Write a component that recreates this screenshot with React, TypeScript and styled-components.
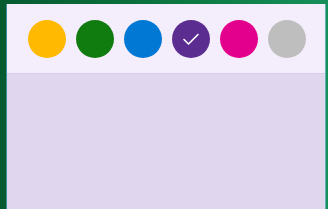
import styled, { createGlobalStyle } from "styled-components";

const GlobalStyle = createGlobalStyle`
  html, body {
    margin: 0;
    padding: 0;
    height: 100%;
  }
  body {
    font-family: "Segoe UI", "Open Sans", sans-serif;
    background: #0b6236;
  }
`;

const Backdrop = styled.div`
  width: 328px;
  height: 209px;
  padding: 4px 3px 0 7px;
  box-sizing: border-box;
  background: linear-gradient(90deg, #075a30 0%, #0d7a43 60%, #16905a 100%);
  overflow: hidden;
`;

const Panel = styled.div`
  height: 100%;
  display: flex;
  flex-direction: column;
  background: #e0d7ee;
  box-shadow: -1px 0 0 #3a8f9a, 1px 0 0 #5fb3b0;
`;

const SwatchBar = styled.div`
  height: 70px;
  display: flex;
  align-items: center;
  gap: 10px;
  padding: 0 19px 0 21px;
  background: #f4edfb;
  border-bottom: 1px solid #d6cde6;
  box-sizing: border-box;
`;

const Swatch = styled.button<{ $color: string }>`
  width: 38px;
  height: 38px;
  border-radius: 50%;
  border: none;
  padding: 0;
  background: ${(p) => p.$color};
  display: flex;
  align-items: center;
  justify-content: center;
  cursor: pointer;
`;

const Body = styled.div`
  flex: 1;
  background: #e0d7ee;
`;

const colors = ["#ffb900", "#107c10", "#0078d4", "#5c2d91", "#e3008c", "#bebebe"];

function App() {
  const selected = 3;
  return (
    <>
      <GlobalStyle />
      <Backdrop>
        <Panel>
          <SwatchBar>
            {colors.map((c, i) => (
              <Swatch key={c} $color={c}>
                {i === selected && (
                  <svg width="18" height="14" viewBox="0 0 18 14">
                    <path
                      d="M2 7.5 L6.5 12 L16 2.5"
                      fill="none"
                      stroke="#fff"
                      strokeWidth="1.6"
                      strokeLinecap="round"
                      strokeLinejoin="round"
                    />
                  </svg>
                )}
              </Swatch>
            ))}
          </SwatchBar>
          <Body />
        </Panel>
      </Backdrop>
    </>
  );
}

export default App;
